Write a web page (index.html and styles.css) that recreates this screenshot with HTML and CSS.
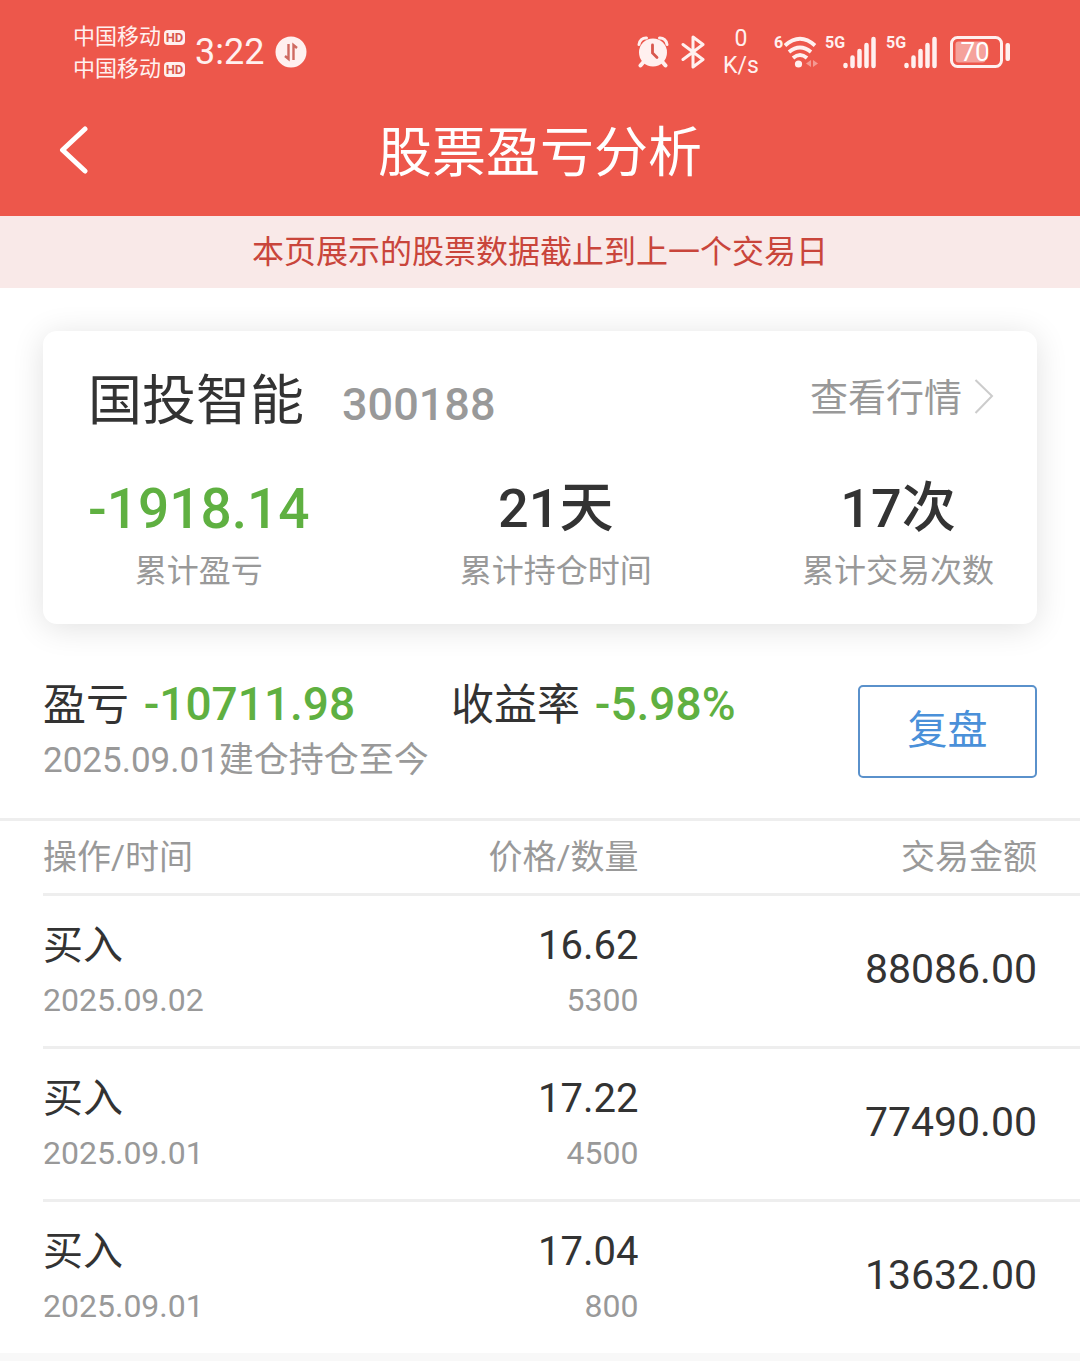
FILE: index.html
```html
<!DOCTYPE html>
<html lang="zh-CN">
<head>
<meta charset="utf-8">
<meta name="viewport" content="width=device-width, initial-scale=1">
<title>股票盈亏分析</title>
<link rel="stylesheet" href="styles.css">
</head>
<body>
<header class="header">
  <div class="status">
    <div class="carriers">
      <div class="carrier">中国移动<span class="hd">HD</span></div>
      <div class="carrier">中国移动<span class="hd">HD</span></div>
    </div>
    <time class="clock">3:22</time>
    <svg class="usb" width="32" height="32" viewBox="0 0 32 32" aria-hidden="true">
      <circle cx="16" cy="16" r="15.500" fill="#fff0ef"/>
      <path d="M13.500 8v15l-3.500-3M18.500 24V9l3.500 3" fill="none" stroke="#cf6a61" stroke-width="2.400"/>
    </svg>
    <div class="indicators">
      <svg class="alarm" width="32" height="32" viewBox="0 0 32 32" aria-hidden="true">
        <g fill="none" stroke="#fff0ef" stroke-linecap="round">
          <path d="M2 8.500a7 7 0 0 1 7.500-6.500M30 8.500a7 7 0 0 0-7.500-6.500" stroke-width="3"/>
          <path d="M6.500 26l-3 3.500M25.500 26l3 3.500" stroke-width="4"/>
        </g>
        <circle cx="16" cy="16.500" r="14" fill="#fff0ef"/>
        <path d="M15.500 9v8l4.500 4.500" fill="none" stroke="#d8574d" stroke-width="2.800" stroke-linecap="round"/>
      </svg>
      <svg class="bluetooth" width="24" height="34" viewBox="0 0 24 34" aria-hidden="true">
        <path d="M2 9.500l20 15L12 32V2l10 7.500-20 15" fill="none" stroke="#fff0ef" stroke-width="3" stroke-linejoin="round" stroke-linecap="round"/>
      </svg>
      <div class="speed"><span>0</span><span>K/s</span></div>
      <div class="wifi">
        <span class="tag">6</span>
        <svg width="34" height="34" viewBox="9 0 34 34" aria-hidden="true">
          <g fill="none" stroke="#fff0ef" stroke-width="3.800">
            <path d="M10 10.500Q25 -3 40 10.500"/>
            <path d="M14 17q11-9 22 0"/>
            <path d="M18 23q7-6 14 0"/>
          </g>
          <circle cx="23.500" cy="29" r="3.600" fill="#fff0ef"/>
          <path d="M36 25v7l-5-3.500zM38 25v7l5-3.500z" fill="#f49a92"/>
        </svg>
      </div>
      <div class="signal">
        <span class="tag">5G</span>
        <svg width="34" height="34" viewBox="18 0 34 34" aria-hidden="true">
          <path d="M20.500 30v1M27.500 22.500V31M34.500 16V31M41.500 10V31M48.500 4V31" stroke="#fff0ef" stroke-width="4.500" stroke-linecap="round"/>
        </svg>
      </div>
      <div class="signal">
        <span class="tag">5G</span>
        <svg width="34" height="34" viewBox="18 0 34 34" aria-hidden="true">
          <path d="M20.500 30v1M27.500 22.500V31M34.500 16V31M41.500 10V31M48.500 4V31" stroke="#fff0ef" stroke-width="4.500" stroke-linecap="round"/>
        </svg>
      </div>
      <svg class="battery" width="60" height="34" viewBox="0 0 60 34" aria-label="电量 70">
        <rect x="1.500" y="2.500" width="50" height="29" rx="6" fill="none" stroke="#fff0ef" stroke-width="3"/>
        <rect x="5.500" y="6.500" width="30" height="21" rx="3" fill="#f5a29b"/>
        <rect x="55.500" y="8" width="4.500" height="18" rx="2" fill="#fff0ef"/>
        <text x="25" y="26" class="level">70</text>
      </svg>
    </div>
  </div>
  <nav class="nav">
    <button class="back" type="button" aria-label="返回">
      <svg width="30" height="48" viewBox="0 0 30 48" aria-hidden="true"><path d="M26 3L3.500 24 26 45" fill="none" stroke="#fff" stroke-width="5" stroke-linecap="round" stroke-linejoin="round"/></svg>
    </button>
    <h1 class="title">股票盈亏分析</h1>
  </nav>
</header>
<p class="notice">本页展示的股票数据截止到上一个交易日</p>
<main class="content">
  <section class="card">
    <div class="card-head">
      <h2 class="stock">国投智能</h2>
      <span class="code">300188</span>
      <a class="quote" href="#">查看行情<svg width="20" height="38" viewBox="0 0 20 38" aria-hidden="true"><path d="M1.500 1L18 17 1.500 34" fill="none" stroke="#ccc" stroke-width="2"/></svg></a>
    </div>
    <dl class="stats">
      <div class="stat"><dt>累计盈亏</dt><dd class="down">-1918.14</dd></div>
      <div class="stat"><dt>累计持仓时间</dt><dd>21天</dd></div>
      <div class="stat"><dt>累计交易次数</dt><dd>17次</dd></div>
    </dl>
  </section>
  <section class="summary">
    <div class="figures">
      <p class="figure">盈亏 <strong class="down">-10711.98</strong></p>
      <p class="figure">收益率 <strong class="down">-5.98%</strong></p>
      <p class="period">2025.09.01建仓持仓至今</p>
    </div>
    <button class="review" type="button">复盘</button>
  </section>
  <div class="trades">
    <table>
      <thead>
        <tr><th>操作/时间</th><th>价格/数量</th><th>交易金额</th></tr>
      </thead>
      <tbody>
        <tr>
          <td><span class="main">买入</span><span class="sub">2025.09.02</span></td>
          <td><span class="main">16.62</span><span class="sub">5300</span></td>
          <td>88086.00</td>
        </tr>
        <tr>
          <td><span class="main">买入</span><span class="sub">2025.09.01</span></td>
          <td><span class="main">17.22</span><span class="sub">4500</span></td>
          <td>77490.00</td>
        </tr>
        <tr>
          <td><span class="main">买入</span><span class="sub">2025.09.01</span></td>
          <td><span class="main">17.04</span><span class="sub">800</span></td>
          <td>13632.00</td>
        </tr>
      </tbody>
    </table>
  </div>
</main>
</body>
</html>
```
FILE: styles.css
```css
* { box-sizing: border-box; margin: 0; padding: 0; }

body {
  background: #f8f8f8;
  color: #333;
  font-family: Roboto, "Noto Sans CJK SC", sans-serif;
}

button { font: inherit; background: none; border: 0; cursor: pointer; }

/* Header */
.header { background: #ed574b; color: #fff; padding-bottom: 20px; }

.status {
  display: flex;
  align-items: center;
  height: 104px;
  padding: 0 70px 0 73px;
  color: #fff0ef;
}

.carriers { padding-top: 2px; }
.carrier {
  display: flex;
  align-items: center;
  gap: 3px;
  font-size: 22px;
  line-height: 32px;
}

.hd {
  width: 21px;
  border-radius: 4px;
  background: #fff0ef;
  color: #d8574d;
  font-size: 13px;
  font-weight: 700;
  line-height: 15px;
  text-align: center;
}

.clock { margin: 0 11px 0 10px; font-size: 36px; line-height: 48px; }

.indicators { display: flex; align-items: center; margin-left: auto; }
.bluetooth { margin: 0 18px 0 12px; }
.speed {
  display: flex;
  flex-direction: column;
  width: 36px;
  font-size: 23px;
  line-height: 27px;
  text-align: center;
}
.wifi, .signal { display: flex; align-items: flex-start; justify-content: space-between; }
.wifi svg, .signal svg { flex: none; }
.wifi { width: 44px; margin: 0 7px 0 15px; }
.signal { width: 52px; margin-right: 9px; }
.signal svg { margin-left: -2px; }
.battery { margin-left: 3px; }
.tag { font-size: 16px; font-weight: 700; line-height: 16px; }
.level { fill: #fff; font-size: 26px; text-anchor: middle; }

.nav {
  display: grid;
  grid-template-columns: 1fr auto 1fr;
  align-items: center;
  height: 92px;
  padding: 0 59px;
}
.back { justify-self: start; display: flex; }
.title { padding-top: 8px; font-size: 54px; font-weight: 400; line-height: 80px; }

.notice {
  background: #f9e9e8;
  color: #c9453b;
  font-size: 32px;
  line-height: 72px;
  text-align: center;
}

/* Stock overview */
.content { background: #fff; padding-top: 43px; }

.card {
  margin: 0 43px;
  padding: 31px 43px 29px 45px;
  border-radius: 14px;
  background: #fff;
  box-shadow: 0 4px 32px rgba(0, 0, 0, 0.12);
}
.card-head { display: flex; align-items: baseline; line-height: 80px; }
.stock { font-size: 54px; font-weight: 400; }
.code { margin-left: 38px; color: #999; font-size: 45px; font-weight: 500; }
.quote {
  display: flex;
  align-items: center;
  align-self: flex-start;
  gap: 12px;
  margin-left: auto;
  color: #999;
  font-size: 38px;
  line-height: 72px;
  text-decoration: none;
}

.stats { display: flex; justify-content: space-between; margin-top: 26px; }
.stat { display: flex; flex-direction: column-reverse; text-align: center; }
.stat dt { color: #999; font-size: 32px; line-height: 48px; }
.stat dd { font-size: 54px; font-weight: 500; line-height: 76px; }
.stat .down { font-size: 55px; }

.down, .stat .down { color: #5fb041; }

/* Position summary */
.summary {
  display: flex;
  justify-content: space-between;
  align-items: center;
  padding: 51px 43px 30px;
}
.figures {
  display: grid;
  grid-template-columns: auto auto;
  column-gap: 96px;
}
.figure { font-size: 43px; line-height: 58px; }
.figure strong { margin-left: 4px; font-size: 46px; font-weight: 500; }
.period { grid-column: 1 / -1; color: #999; font-size: 35px; line-height: 54px; }
.review {
  width: 179px;
  padding: 16px 0 17px;
  border: 2px solid #5a91cb;
  border-radius: 5px;
  color: #4a90d9;
  font-size: 40px;
  line-height: 56px;
}

/* Trades */
.trades { padding-left: 43px; border-top: 3px solid #eee; }
table { width: 100%; border-collapse: collapse; table-layout: fixed; }
tbody tr { border-top: 3px solid #eee; }
th {
  height: 73px;
  color: #999;
  font-size: 34px;
  font-weight: 400;
  line-height: 68px;
  text-align: right;
}
td { height: 153px; padding-bottom: 4px; font-size: 41px; text-align: right; }
th:first-child, td:first-child { width: 34%; text-align: left; }
th:nth-child(2), td:nth-child(2) { width: 24%; padding-right: 6px; }
th:last-child, td:last-child { padding-right: 43px; }
.main, .sub { display: block; }
.main { padding-top: 2px; font-size: 40px; line-height: 60px; }
.sub { color: #999; font-size: 32px; line-height: 48px; }
```
